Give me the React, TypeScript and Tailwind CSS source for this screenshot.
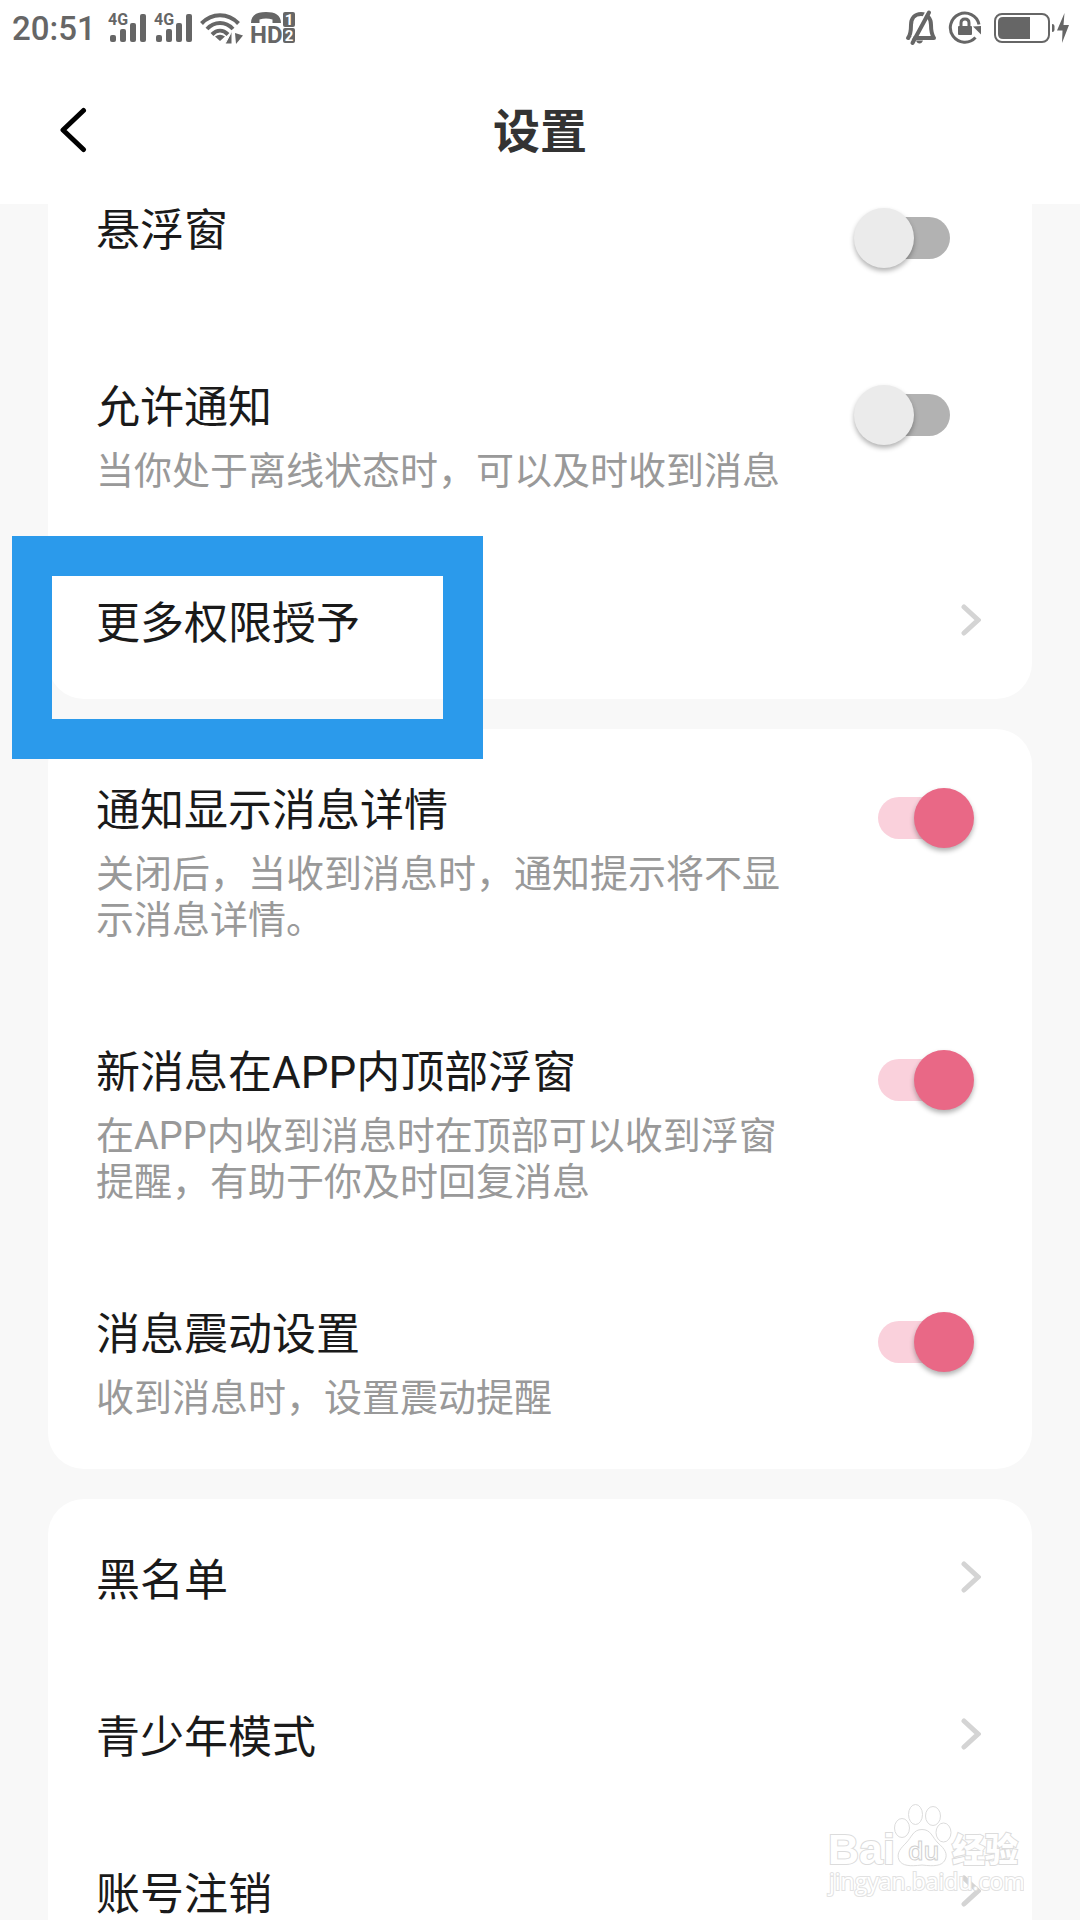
import { useState } from "react";

type SwitchRowProps = {
  id: string;
  title: string;
  description?: string;
  defaultOn?: boolean;
};

function SwitchRow({ id, title, description, defaultOn = false }: SwitchRowProps) {
  const [on, setOn] = useState(defaultOn);
  return (
    <div className="flex min-h-[177px] items-start gap-14 pt-14 pr-[58px] pb-12 pl-12">
      <div className="min-w-0 flex-1">
        <label htmlFor={id} className="block text-[44px] leading-[52px] text-[#1a1a1a]">
          {title}
        </label>
        {description && (
          <p id={`${id}-desc`} className="mt-3.5 text-[38px] leading-[46px] text-[#999999]">
            {description}
          </p>
        )}
      </div>
      <input
        id={id}
        type="checkbox"
        role="switch"
        checked={on}
        onChange={() => setOn(!on)}
        aria-describedby={description ? `${id}-desc` : undefined}
        className="relative mt-[3px] h-[60px] w-[120px] shrink-0 cursor-pointer appearance-none before:absolute before:top-[9px] before:left-6 before:h-[42px] before:w-[72px] before:rounded-full before:bg-[#b2b2b2] after:absolute after:top-0 after:left-0 after:size-[60px] after:rounded-full after:bg-[#ebebeb] after:shadow-[0_3px_5px_rgba(0,0,0,0.3)] checked:before:bg-[#fad1dc] checked:after:left-[60px] checked:after:bg-[#e96886]"
      />
    </div>
  );
}

function LinkRow({ title, highlighted = false }: { title: string; highlighted?: boolean }) {
  return (
    <div className="relative">
      <button
        type="button"
        className="flex w-full items-start justify-between pt-14 pr-[51px] pb-[49px] pl-12 text-left text-[44px] leading-[52px] text-[#1a1a1a]"
      >
        <span>{title}</span>
        <svg className="mt-1.5 h-8 w-5" viewBox="0 0 20 32" fill="none" aria-hidden="true">
          <path d="M3 3L17 16L3 29" stroke="#d4d4d4" strokeWidth="5" strokeLinecap="round" />
        </svg>
      </button>
      {highlighted && (
        <div className="pointer-events-none absolute -top-1.5 -left-9 z-10 h-[223px] w-[471px] border-[40px] border-[#2b9aeb]" />
      )}
    </div>
  );
}

function SignalIcon() {
  return (
    <svg className="h-[30px] w-[39px] overflow-visible" viewBox="0 0 39 30" fill="#666666" aria-hidden="true">
      <text x="0" y="12" fontFamily="Roboto, sans-serif" fontWeight="700" fontSize="16">
        4G
      </text>
      <rect x="2" y="22" width="6" height="7" rx="2" />
      <rect x="12" y="16" width="6" height="13" rx="2" />
      <rect x="22" y="10" width="6" height="19" rx="2" />
      <rect x="32" y="1" width="6" height="28" rx="2" />
    </svg>
  );
}

function WifiIcon() {
  return (
    <svg className="h-8 w-11" viewBox="0 0 44 32" fill="none" aria-hidden="true">
      <g stroke="#666666" strokeWidth="4">
        <path d="M1.5 11.5C12 0.5 28 0.5 38.5 11.5" />
        <path d="M7 17C14.5 9 25.5 9 33 17" />
        <path d="M12 22.5C17 17.5 23 17.5 28 22.5" />
      </g>
      <path d="M20 29L15 24.5Q20 21 25 24.5Z" fill="#666666" />
      <path d="M32 19V32H25Z" fill="#666666" stroke="#fff" strokeWidth="1" />
      <path d="M35 21L43 23.5L36 32Z" fill="#666666" />
    </svg>
  );
}

function HdIcon() {
  return (
    <svg className="h-8 w-[46px] overflow-visible" viewBox="0 0 46 32" fill="#666666" aria-hidden="true">
      <path d="M0 11C0 3 6 0 15 0S30 3 30 11H21.5V7.500Q15 5.5 8.5 7.5V11Z" />
      <text x="-1" y="31" fontFamily="Roboto, sans-serif" fontWeight="700" fontSize="24">
        HD
      </text>
      <rect x="32" y="0" width="12" height="15" rx="2" />
      <rect x="32" y="16" width="12" height="15" rx="2" />
      <g fill="#fff" fontFamily="Roboto, sans-serif" fontWeight="700" fontSize="15" textAnchor="middle">
        <text x="38" y="13">1</text>
        <text x="38" y="29">2</text>
      </g>
    </svg>
  );
}

function MutedBellIcon() {
  return (
    <svg className="h-[34px] w-[30px] overflow-visible" viewBox="0 0 30 34" fill="none" aria-hidden="true">
      <path
        d="M2 27H28C26 24 25 21 25 14C25 7 21 3 15 3S5 7 5 14C5 21 4.500 24 2 27Z"
        stroke="#666666"
        strokeWidth="4"
        strokeLinejoin="round"
      />
      <path d="M10 29.5H17Q16 32.5 13.5 32.5Q11 32.5 10 29.5Z" fill="#666666" />
      <path d="M20 1.500L4 30" stroke="#fff" strokeWidth="2" />
      <path d="M23 1.5L6.5 32" stroke="#666666" strokeWidth="4" strokeLinecap="round" />
    </svg>
  );
}

function RotationLockIcon() {
  return (
    <svg className="size-[34px]" viewBox="0 0 34 34" fill="none" aria-hidden="true">
      <path d="M27.5 26.5A14.5 14.5 0 1 1 31 13.5" stroke="#666666" strokeWidth="3" />
      <path d="M25 15.5L33 15V23.5Z" fill="#666666" />
      <rect x="10" y="15" width="14" height="9" rx="1" fill="#666666" />
      <path d="M13 16V12Q13 8 17 8T21 12V16" stroke="#666666" strokeWidth="3" />
    </svg>
  );
}

function BatteryIcon() {
  return (
    <svg className="h-8 w-[76px]" viewBox="0 0 76 32" fill="none" aria-hidden="true">
      <rect x="1" y="2" width="54" height="28" rx="7" stroke="#666666" strokeWidth="2" />
      <path d="M9 5H36V27H9Q4 27 4 22V10Q4 5 9 5Z" fill="#666666" />
      <path d="M58 12Q60.5 12 60.5 14V18Q60.5 20 58 20Z" fill="#666666" />
      <path d="M70.5 1L63 18.5H68.5L68 31L75 13H69.5Z" fill="#666666" />
    </svg>
  );
}

function Watermark() {
  return (
    <svg
      className="pointer-events-none absolute right-14 bottom-5 z-20 h-[100px] w-[200px]"
      viewBox="0 0 200 100"
      fill="#ffffff"
      stroke="#dcdcdc"
      strokeWidth="1"
      aria-label="Baidu 经验"
    >
      <g paintOrder="stroke" strokeWidth="2">
        <text x="4" y="64" fontFamily="'Liberation Sans', sans-serif" fontWeight="700" fontSize="43">
          Bai
        </text>
        <text x="128" y="62" fontFamily="'Noto Sans CJK SC', sans-serif" fontWeight="900" fontSize="33">
          经验
        </text>
      </g>
      <ellipse cx="78" cy="28" rx="7.5" ry="9.5" />
      <ellipse cx="91.5" cy="14.5" rx="7" ry="10" />
      <ellipse cx="109" cy="16" rx="7.5" ry="9.5" />
      <ellipse cx="119.5" cy="32.5" rx="7.5" ry="9.5" />
      <path d="M98 29.5C107 29.5 108 37 114 43C121 49 124 54 121 60C118 66 110 66.5 98 65C86 66.5 78 66 75 60C72 53 77 48 82 43C88 37 89 29.5 98 29.5Z" />
      <text x="84" y="60" fontFamily="'Open Sans', sans-serif" fontWeight="600" fontSize="25" stroke="#d0d0d0">
        du
      </text>
      <text
        x="5"
        y="90"
        fontFamily="'Open Sans', sans-serif"
        fontSize="23"
        strokeWidth="2"
        paintOrder="stroke"
        stroke="#e2e2e2"
      >
        jingyan.baidu.com
      </text>
    </svg>
  );
}

export default function App() {
  return (
    <div className="relative flex h-screen flex-col overflow-hidden bg-[#f8f8f8] font-['Roboto','Noto_Sans_CJK_SC',sans-serif]">
      <header className="relative z-10 shrink-0 bg-white">
        <div className="flex h-14 items-center justify-between pr-2.5 pl-3">
          <div className="flex items-center">
            <span className="mr-3 text-[33px] leading-none font-medium text-[#666666]">20:51</span>
            <div className="flex items-center gap-[7px]">
              <SignalIcon />
              <SignalIcon />
              <WifiIcon />
              <HdIcon />
            </div>
          </div>
          <div className="flex items-center gap-3">
            <MutedBellIcon />
            <RotationLockIcon />
            <BatteryIcon />
          </div>
        </div>
        <div className="grid h-[148px] grid-cols-[1fr_auto_1fr] items-center px-[58px]">
          <button type="button" aria-label="返回" className="justify-self-start">
            <svg className="h-[46px] w-[30px]" viewBox="0 0 30 46" fill="none" aria-hidden="true">
              <path
                d="M25.5 3.5L5 23L25.5 42.5"
                stroke="#000000"
                strokeWidth="5"
                strokeLinecap="round"
                strokeLinejoin="round"
              />
            </svg>
          </button>
          <h1 className="pt-1 text-[47px] leading-[60px] font-bold text-[#333333]">设置</h1>
        </div>
      </header>

      <main className="-mt-[55px] flex flex-col gap-[30px] px-12">
        <section className="rounded-[36px] bg-white">
          <SwitchRow id="float-window" title="悬浮窗" />
          <SwitchRow id="allow-notify" title="允许通知" description="当你处于离线状态时，可以及时收到消息" />
          <LinkRow title="更多权限授予" highlighted />
        </section>
        <section className="rounded-[36px] bg-white">
          <SwitchRow
            id="notify-detail"
            title="通知显示消息详情"
            description="关闭后，当收到消息时，通知提示将不显示消息详情。"
            defaultOn
          />
          <SwitchRow
            id="in-app-banner"
            title="新消息在APP内顶部浮窗"
            description="在APP内收到消息时在顶部可以收到浮窗提醒，有助于你及时回复消息"
            defaultOn
          />
          <SwitchRow id="vibration" title="消息震动设置" description="收到消息时，设置震动提醒" defaultOn />
        </section>
        <section className="rounded-[36px] bg-white">
          <LinkRow title="黑名单" />
          <LinkRow title="青少年模式" />
          <LinkRow title="账号注销" />
        </section>
      </main>
      <Watermark />
    </div>
  );
}
